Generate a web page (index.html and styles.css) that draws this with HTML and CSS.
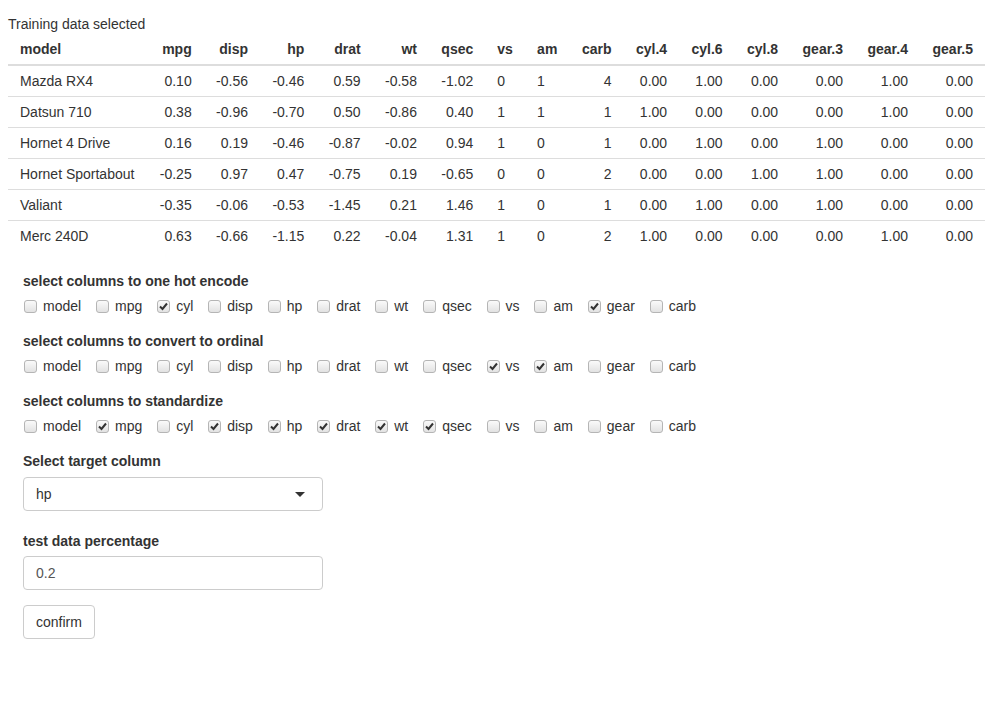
FILE: index.html
```html
<!DOCTYPE html>
<html>
<head>
<meta charset="utf-8">
<link rel="stylesheet" href="styles.css">
</head>
<body>
<div class="page">
  <div class="title">Training data selected</div>
  <table class="data">
    <thead>
      <tr><th class="l">model</th><th>mpg</th><th>disp</th><th>hp</th><th>drat</th><th>wt</th><th>qsec</th><th class="l">vs</th><th class="l">am</th><th>carb</th><th>cyl.4</th><th>cyl.6</th><th>cyl.8</th><th>gear.3</th><th>gear.4</th><th>gear.5</th></tr>
    </thead>
    <tbody>
      <tr><td class="l">Mazda RX4</td><td>0.10</td><td>-0.56</td><td>-0.46</td><td>0.59</td><td>-0.58</td><td>-1.02</td><td class="l">0</td><td class="l">1</td><td>4</td><td>0.00</td><td>1.00</td><td>0.00</td><td>0.00</td><td>1.00</td><td>0.00</td></tr>
      <tr><td class="l">Datsun 710</td><td>0.38</td><td>-0.96</td><td>-0.70</td><td>0.50</td><td>-0.86</td><td>0.40</td><td class="l">1</td><td class="l">1</td><td>1</td><td>1.00</td><td>0.00</td><td>0.00</td><td>0.00</td><td>1.00</td><td>0.00</td></tr>
      <tr><td class="l">Hornet 4 Drive</td><td>0.16</td><td>0.19</td><td>-0.46</td><td>-0.87</td><td>-0.02</td><td>0.94</td><td class="l">1</td><td class="l">0</td><td>1</td><td>0.00</td><td>1.00</td><td>0.00</td><td>1.00</td><td>0.00</td><td>0.00</td></tr>
      <tr><td class="l">Hornet Sportabout</td><td>-0.25</td><td>0.97</td><td>0.47</td><td>-0.75</td><td>0.19</td><td>-0.65</td><td class="l">0</td><td class="l">0</td><td>2</td><td>0.00</td><td>0.00</td><td>1.00</td><td>1.00</td><td>0.00</td><td>0.00</td></tr>
      <tr><td class="l">Valiant</td><td>-0.35</td><td>-0.06</td><td>-0.53</td><td>-1.45</td><td>0.21</td><td>1.46</td><td class="l">1</td><td class="l">0</td><td>1</td><td>0.00</td><td>1.00</td><td>0.00</td><td>1.00</td><td>0.00</td><td>0.00</td></tr>
      <tr><td class="l">Merc 240D</td><td>0.63</td><td>-0.66</td><td>-1.15</td><td>0.22</td><td>-0.04</td><td>1.31</td><td class="l">1</td><td class="l">0</td><td>2</td><td>1.00</td><td>0.00</td><td>0.00</td><td>0.00</td><td>1.00</td><td>0.00</td></tr>
    </tbody>
  </table>

  <div class="form">
    <div class="group">
      <div class="label">select columns to one hot encode</div>
      <div class="opts">
        <label class="opt"><input type="checkbox">model</label>
        <label class="opt"><input type="checkbox">mpg</label>
        <label class="opt"><input type="checkbox" checked>cyl</label>
        <label class="opt"><input type="checkbox">disp</label>
        <label class="opt"><input type="checkbox">hp</label>
        <label class="opt"><input type="checkbox">drat</label>
        <label class="opt"><input type="checkbox">wt</label>
        <label class="opt"><input type="checkbox">qsec</label>
        <label class="opt"><input type="checkbox">vs</label>
        <label class="opt"><input type="checkbox">am</label>
        <label class="opt"><input type="checkbox" checked>gear</label>
        <label class="opt"><input type="checkbox">carb</label>
      </div>
    </div>
    <div class="group">
      <div class="label">select columns to convert to ordinal</div>
      <div class="opts">
        <label class="opt"><input type="checkbox">model</label>
        <label class="opt"><input type="checkbox">mpg</label>
        <label class="opt"><input type="checkbox">cyl</label>
        <label class="opt"><input type="checkbox">disp</label>
        <label class="opt"><input type="checkbox">hp</label>
        <label class="opt"><input type="checkbox">drat</label>
        <label class="opt"><input type="checkbox">wt</label>
        <label class="opt"><input type="checkbox">qsec</label>
        <label class="opt"><input type="checkbox" checked>vs</label>
        <label class="opt"><input type="checkbox" checked>am</label>
        <label class="opt"><input type="checkbox">gear</label>
        <label class="opt"><input type="checkbox">carb</label>
      </div>
    </div>
    <div class="group">
      <div class="label">select columns to standardize</div>
      <div class="opts">
        <label class="opt"><input type="checkbox">model</label>
        <label class="opt"><input type="checkbox" checked>mpg</label>
        <label class="opt"><input type="checkbox">cyl</label>
        <label class="opt"><input type="checkbox" checked>disp</label>
        <label class="opt"><input type="checkbox" checked>hp</label>
        <label class="opt"><input type="checkbox" checked>drat</label>
        <label class="opt"><input type="checkbox" checked>wt</label>
        <label class="opt"><input type="checkbox" checked>qsec</label>
        <label class="opt"><input type="checkbox">vs</label>
        <label class="opt"><input type="checkbox">am</label>
        <label class="opt"><input type="checkbox">gear</label>
        <label class="opt"><input type="checkbox">carb</label>
      </div>
    </div>
    <div class="group sel-group">
      <div class="label lbl-sel">Select target column</div>
      <div class="select">
        <span>hp</span>
        <svg class="caret" width="10" height="5" viewBox="0 0 10 5"><path d="M0 0H10L5 5Z" fill="#333"/></svg>
      </div>
    </div>
    <div class="group">
      <div class="label">test data percentage</div>
      <input class="text" type="text" value="0.2">
    </div>
    <button class="btn" type="button">confirm</button>
  </div>
</div>
</body>
</html>
```

FILE: styles.css
```css
html, body {
  margin: 0;
  padding: 0;
  background: #fff;
}
body {
  font-family: "Liberation Sans", Arial, sans-serif;
  font-size: 14px;
  line-height: 20px;
  color: #333;
}
.page {
  padding: 14px 8px 8px 8px;
}
.title {
  line-height: 20px;
}
.data {
  border-collapse: collapse;
  border-spacing: 0;
  margin-bottom: 20px;
  width: 977px;
}
.data th, .data td {
  padding: 5px 12px;
  text-align: right;
  line-height: 20px;
  white-space: nowrap;
}
.data th {
  font-weight: bold;
  border-bottom: 2px solid #ddd;
}
.data td {
  border-top: 1px solid #ddd;
}
.data .l {
  text-align: left;
}
.form {
  padding-left: 15px;
}
.group {
  margin-bottom: 15px;
}
.label {
  font-weight: bold;
  margin-bottom: 5px;
}
.lbl-sel {
  margin-bottom: 6px;
}
.opts {
  display: flex;
  flex-wrap: wrap;
  column-gap: 14.9px;
  margin-left: 1px;
}
.opt {
  display: flex;
  align-items: center;
  line-height: 20px;
  height: 20px;
}
.opt input {
  -webkit-appearance: none;
  appearance: none;
  width: 13px;
  height: 13px;
  margin: 0 6px 0 0;
  border: 1px solid #b5b5b5;
  border-radius: 3px;
  background: linear-gradient(#fafafa, #e2e2e2);
  box-sizing: border-box;
}
.opt input:checked {
  background-image: url("data:image/svg+xml;utf8,<svg xmlns='http://www.w3.org/2000/svg' width='11' height='11' viewBox='0 0 11 11'><path d='M2 5.5L4.5 8L9 2.5' fill='none' stroke='%23333' stroke-width='2'/></svg>"), linear-gradient(#fafafa, #e2e2e2);
  background-repeat: no-repeat;
  background-position: center;
}
.sel-group {
  margin-bottom: 20px;
}
.select {
  width: 300px;
  height: 34px;
  box-sizing: border-box;
  border: 1px solid #ccc;
  border-radius: 4px;
  padding: 6px 12px;
  display: flex;
  align-items: center;
  justify-content: space-between;
  color: #333;
}
.caret {
  margin-right: 5px;
}
.text {
  display: block;
  width: 300px;
  height: 34px;
  box-sizing: border-box;
  border: 1px solid #ccc;
  border-radius: 4px;
  padding: 6px 12px;
  font-family: "Liberation Sans", Arial, sans-serif;
  font-size: 14px;
  color: #555;
  margin: 0;
}
.btn {
  display: block;
  height: 34px;
  box-sizing: border-box;
  border: 1px solid #ccc;
  border-radius: 4px;
  background: #fff;
  padding: 6px 12px;
  font-family: "Liberation Sans", Arial, sans-serif;
  font-size: 14px;
  line-height: 20px;
  color: #333;
  margin: 0;
}
```
